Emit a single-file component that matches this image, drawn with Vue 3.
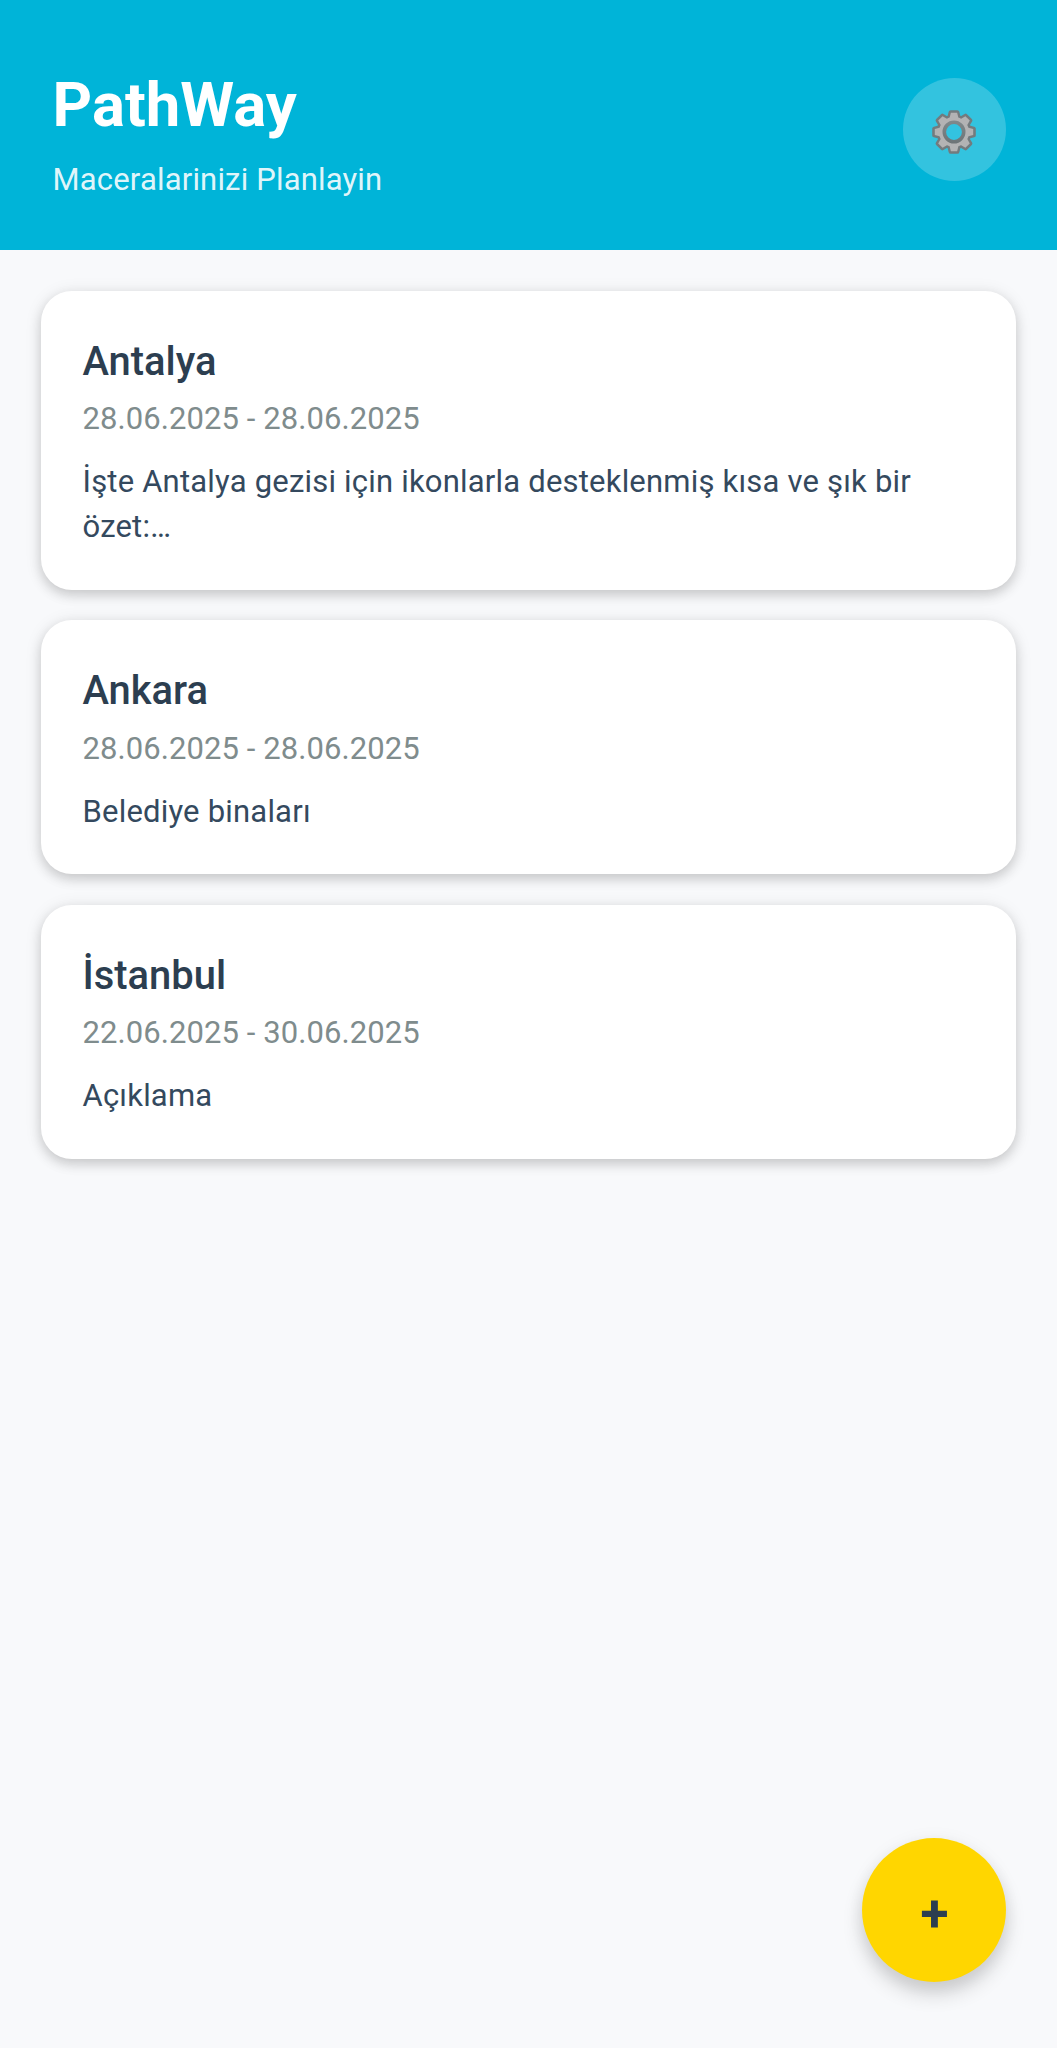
<script setup>
const trips = [
  { city: 'Antalya', dates: '28.06.2025 - 28.06.2025', note: 'İşte Antalya gezisi için ikonlarla desteklenmiş kısa ve şık bir özet:…' },
  { city: 'Ankara', dates: '28.06.2025 - 28.06.2025', note: 'Belediye binaları' },
  { city: 'İstanbul', dates: '22.06.2025 - 30.06.2025', note: 'Açıklama' },
]
const teeth = [0, 45, 90, 135, 180, 225, 270, 315]
</script>

<template>
  <div class="screen">
    <header class="header">
      <div>
        <h1 class="brand">PathWay</h1>
        <p class="tagline">Maceralarinizi Planlayin</p>
      </div>
      <button class="settings" aria-label="Ayarlar">
        <svg width="46" height="46" viewBox="-23 -23 46 46">
          <defs>
            <linearGradient id="rim" x1="0" y1="-22" x2="0" y2="22" gradientUnits="userSpaceOnUse">
              <stop offset="0" stop-color="#8a9395" />
              <stop offset="1" stop-color="#636a6d" />
            </linearGradient>
          </defs>
          <circle r="17.4" fill="#737b7e" />
          <g stroke="#737b7e" fill="#737b7e" stroke-width="4" stroke-linejoin="round">
            <path v-for="a in teeth" :key="a" d="M-4.8-14L-3.4-19.8H3.4L4.8-14Z" :transform="`rotate(${a})`" />
          </g>
          <g fill="#b3b3b4">
            <circle r="15" />
            <path v-for="a in teeth" :key="a" d="M-4.6-13.5L-3.1-19.2H3.1L4.6-13.5Z" :transform="`rotate(${a})`" />
          </g>
          <circle r="9.7" fill="#33c3e0" stroke="url(#rim)" stroke-width="3.6" />
        </svg>
      </button>
    </header>

    <main class="list">
      <article v-for="trip in trips" :key="trip.city" class="card">
        <h2 class="city">{{ trip.city }}</h2>
        <p class="dates">{{ trip.dates }}</p>
        <p class="note">{{ trip.note }}</p>
      </article>
    </main>

    <button class="fab" aria-label="Yeni gezi"><span>+</span></button>
  </div>
</template>

<style>
body {
  margin: 0;
  background: #f8f9fb;
}
</style>

<style scoped>
.screen {
  min-height: 2048px;
  background: #f8f9fb;
  font-family: Roboto, sans-serif;
}
h1, h2, p {
  margin: 0;
}
button {
  padding: 0;
  border: 0;
  font-family: inherit;
}
.header {
  box-sizing: border-box;
  height: 249.5px;
  padding: 68px 51px 0 52.6px;
  display: flex;
  justify-content: space-between;
  align-items: flex-start;
  background: #00b4d8;
  color: #fff;
}
.brand {
  font-size: 61.6px;
  line-height: 74px;
  font-weight: 700;
}
.tagline {
  margin-top: 19px;
  font-size: 31px;
  line-height: 38px;
  letter-spacing: 0.17px;
  color: rgba(255, 255, 255, 0.9);
}
.settings {
  width: 103px;
  height: 103px;
  margin-top: 10px;
  display: grid;
  place-items: center;
  border-radius: 50%;
  background: rgba(255, 255, 255, 0.2);
}
.settings svg {
  display: block;
  margin: 4px 2px 0 0;
}
.list {
  display: flex;
  flex-direction: column;
  gap: 30.6px;
  padding: 41.3px 41px;
}
.card {
  box-sizing: border-box;
  padding: 47px 41px 40.4px 41.5px;
  border-radius: 31px;
  background: #fff;
  box-shadow: 0 5px 12px rgba(0, 0, 0, 0.15), 0 2px 18px rgba(0, 0, 0, 0.09);
}
.city {
  font-size: 39.9px;
  line-height: 48px;
  font-weight: 500;
  color: #2c3e50;
}
.dates {
  margin-top: 14.4px;
  font-size: 31px;
  line-height: 38px;
  letter-spacing: 0.08px;
  color: #7f8c8d;
}
.note {
  margin-top: 22px;
  font-size: 31px;
  line-height: 44.5px;
  letter-spacing: 0.2px;
  color: #34495e;
}
.fab {
  position: fixed;
  right: 51px;
  bottom: 66px;
  width: 144px;
  height: 144px;
  border-radius: 50%;
  background: #ffd600;
  color: #2c3e50;
  font-size: 51.4px;
  line-height: 144px;
  font-weight: 700;
  box-shadow: 0 12px 20px rgba(0, 0, 0, 0.16), 0 4px 20px rgba(0, 0, 0, 0.07);
}
.fab span {
  display: block;
  padding: 4px 0 0 1px;
}
</style>
